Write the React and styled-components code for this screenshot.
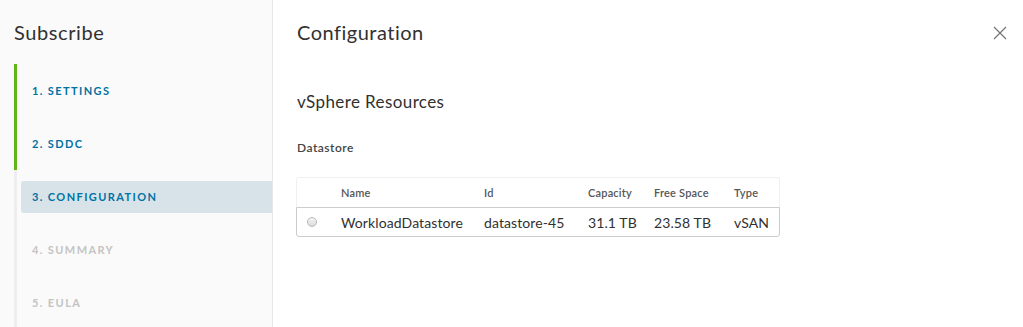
import React from 'react';
import styled, { createGlobalStyle } from 'styled-components';

const GlobalStyle = createGlobalStyle`
  html, body {
    margin: 0;
    padding: 0;
    background: #fff;
    font-family: Lato, "Open Sans", sans-serif;
    color: #333;
  }
`

const Layout = styled.div`
  display: flex;
  width: 1023px;
  height: 327px;
  overflow: hidden;
`

const Sidebar = styled.nav`
  width: 273px;
  flex-shrink: 0;
  background: #fafafa;
  border-right: 1px solid #e8e8e8;
  padding: 20px 0 0 14px;
  box-sizing: border-box;
`

const SideTitle = styled.h2`
  margin: 0 0 20px 0;
  font-size: 20px;
  font-weight: 400;
  line-height: 24px;
  letter-spacing: 0.6px;
  color: #313131;
`

const Steps = styled.ol`
  list-style: none;
  margin: 0;
  padding: 0;
`

const Step = styled.li`
  height: 53px;
  display: flex;
  align-items: center;
  border-left: 3px solid ${p => (p.done ? '#60b515' : '#eee')};
  box-sizing: border-box;
  padding-left: 4px;
`

const StepLabel = styled.span`
  flex: 1;
  height: 32px;
  display: flex;
  align-items: center;
  padding-left: 11px;
  font-size: 11px;
  font-weight: 700;
  letter-spacing: 1.4px;
  color: ${p => (p.disabled ? '#c4c4c4' : '#0072a3')};
  background: ${p => (p.active ? '#d8e3e9' : 'transparent')};
  border-radius: 3px 0 0 3px;
`

const Main = styled.main`
  flex: 1;
  padding: 20px 0 0 24px;
  position: relative;
`

const Title = styled.h1`
  margin: 0;
  font-size: 20px;
  font-weight: 400;
  line-height: 24px;
  letter-spacing: 0.5px;
  color: #313131;
`

const CloseButton = styled.button`
  position: absolute;
  top: 26px;
  right: 16px;
  width: 14px;
  height: 14px;
  padding: 0;
  border: none;
  background: none;
  display: flex;
`

const Section = styled.h3`
  margin: 48px 0 0 0;
  font-size: 17px;
  font-weight: 400;
  line-height: 20px;
  letter-spacing: 0.4px;
  color: #313131;
`

const FieldLabel = styled.div`
  margin-top: 29px;
  font-size: 12px;
  font-weight: 600;
  letter-spacing: 0.5px;
  color: #454545;
  line-height: 14px;
`

const Grid = styled.div`
  margin-top: 22px;
  margin-left: -1px;
  width: 484px;
`

const Row = styled.div`
  display: grid;
  grid-template-columns: 32px 143px 104px 66px 80px 1fr;
  align-items: center;
  height: 30px;
  box-sizing: border-box;
  border: 1px solid ${p => (p.header ? '#f0f0f0' : '#ccc')};
  border-bottom: ${p => (p.header ? 'none' : '1px solid #ccc')};
  border-radius: ${p => (p.header ? '3px 3px 0 0' : '0 0 3px 3px')};
`

const Cell = styled.div`
  padding-left: 12px;
  font-size: ${p => (p.head ? '11px' : '14px')};
  font-weight: ${p => (p.head ? 600 : 400)};
  color: ${p => (p.head ? '#565656' : '#313131')};
  letter-spacing: ${p => (p.head ? '0.2px' : '0.1px')};
  white-space: nowrap;
`

const Radio = styled.span`
  display: block;
  width: 10px;
  height: 10px;
  margin-left: 10px;
  border-radius: 50%;
  border: 1px solid #b8b8b8;
  background: linear-gradient(#f4f4f4, #dcdcdc);
  box-sizing: border-box;
`

const steps = [
  { label: '1. SETTINGS', done: true },
  { label: '2. SDDC', done: true },
  { label: '3. CONFIGURATION', active: true },
  { label: '4. SUMMARY', disabled: true },
  { label: '5. EULA', disabled: true },
];

export default function App() {
  return (
    <Layout>
      <GlobalStyle />
      <Sidebar>
        <SideTitle>Subscribe</SideTitle>
        <Steps>
          {steps.map(s => (
            <Step key={s.label} done={s.done}>
              <StepLabel active={s.active} disabled={s.disabled}>{s.label}</StepLabel>
            </Step>
          ))}
        </Steps>
      </Sidebar>
      <Main>
        <Title>Configuration</Title>
        <CloseButton aria-label="Close">
          <svg width="14" height="14" viewBox="0 0 14 14">
            <path d="M1 1L13 13M13 1L1 13" stroke="#747474" strokeWidth="1.2" fill="none" />
          </svg>
        </CloseButton>
        <Section>vSphere Resources</Section>
        <FieldLabel>Datastore</FieldLabel>
        <Grid>
          <Row header>
            <Cell head />
            <Cell head>Name</Cell>
            <Cell head>Id</Cell>
            <Cell head>Capacity</Cell>
            <Cell head>Free Space</Cell>
            <Cell head>Type</Cell>
          </Row>
          <Row>
            <Radio />
            <Cell>WorkloadDatastore</Cell>
            <Cell>datastore-45</Cell>
            <Cell>31.1 TB</Cell>
            <Cell>23.58 TB</Cell>
            <Cell>vSAN</Cell>
          </Row>
        </Grid>
      </Main>
    </Layout>
  );
}
